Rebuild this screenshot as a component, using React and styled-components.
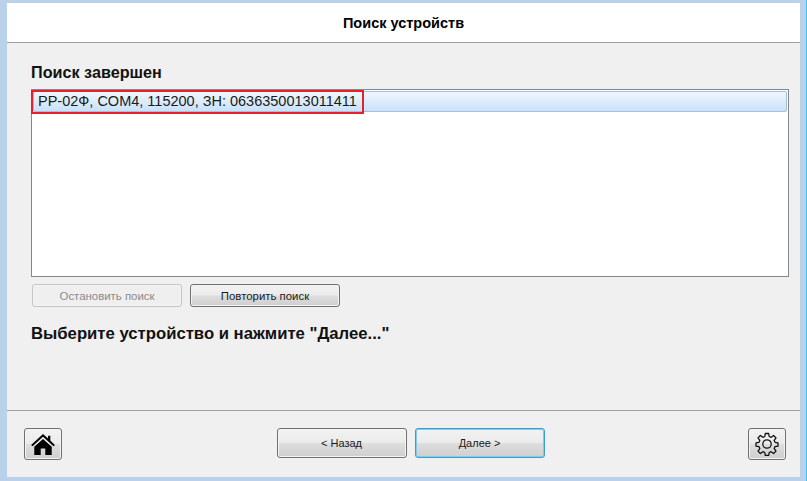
import React from 'react';
import styled, { createGlobalStyle } from 'styled-components';

const GlobalStyle = createGlobalStyle`
  html, body { margin: 0; padding: 0; }
  body { font-family: "Liberation Sans", Arial, sans-serif; background: #b9d1ea; }
`;

const Frame = styled.div`
  width: 807px;
  height: 481px;
  box-sizing: border-box;
  padding: 3px 6px 4px 7px;
  background: #b9d1ea;
  border-right: 1px solid #3fc3ee;
  display: flex;
`;

const Wizard = styled.div`
  flex: 1;
  display: flex;
  flex-direction: column;
  background: #f0f0f0;
`;

const Header = styled.header`
  height: 39px;
  flex: none;
  background: #fff;
  border-bottom: 1px solid #a0a0a0;
  display: flex;
  align-items: center;
  justify-content: center;
  font-size: 14.5px;
  font-weight: 700;
  color: #000;
`;

const Content = styled.main`
  flex: 1;
  padding: 19px 11px 0 24px;
  display: flex;
  flex-direction: column;
`;

const Heading = styled.h2`
  margin: 0;
  font-size: 16.2px;
  line-height: 20px;
  font-weight: 700;
  color: #111;
`;

const DeviceList = styled.div`
  margin-top: 7px;
  height: 188px;
  box-sizing: border-box;
  background: #fff;
  border: 1px solid #828790;
  padding: 1px;
`;

const DeviceRow = styled.div`
  position: relative;
  height: 21px;
  box-sizing: border-box;
  border: 1px solid #a5bfdc;
  border-radius: 2px;
  background: linear-gradient(#f0f7fe, #c9e1fa);
  padding-left: 4px;
  font-size: 14.5px;
  line-height: 19px;
  color: #1a1a1a;
`;

const Highlight = styled.span`
  position: absolute;
  left: -3px;
  top: -2px;
  width: 333px;
  height: 24px;
  border: 2px solid #e8202a;
  box-sizing: border-box;
`;

const SearchButtons = styled.div`
  display: flex;
  gap: 8px;
  margin: 7px 0 0 1px;
`;

const Button = styled.button`
  width: ${({ $w }) => $w}px;
  height: ${({ $h }) => $h}px;
  box-sizing: border-box;
  padding: 0;
  font-family: "Liberation Sans", Arial, sans-serif;
  font-size: 11px;
  display: flex;
  align-items: center;
  justify-content: center;
  color: ${({ disabled }) => (disabled ? '#8a8a8a' : '#1a1a1a')};
  border-radius: 3px;
  border: 1px solid ${({ disabled, $focus }) => (disabled ? '#c4c4c4' : $focus ? '#3c9fc8' : '#707070')};
  box-shadow: ${({ $focus }) => ($focus ? 'inset 0 0 0 1px #7fcdea' : 'inset 0 0 0 1px #f4f4f4')};
  background: ${({ disabled }) =>
    disabled ? '#efefef' : 'linear-gradient(#f2f2f2 0%, #ebebeb 48%, #dddddd 52%, #cfcfcf 100%)'};
`;

const SearchButton = styled(Button)`
  font-size: 11.4px;
`;

const Prompt = styled(Heading)`
  margin-top: 17px;
  font-size: 16.7px;
`;

const Footer = styled.footer`
  height: 67px;
  flex: none;
  box-sizing: border-box;
  border-top: 1px solid #a0a0a0;
  padding: 17px 14px 0 17px;
  display: flex;
  justify-content: space-between;
  align-items: flex-start;
`;

const NavButtons = styled.div`
  display: flex;
  gap: 8px;
  margin-left: 11px;
`;

const HomeIcon = () => (
  <svg width="24" height="22" viewBox="0 0 26 24">
    <path fill="#000" d="M13 1 L18.5 6 V3 H21 V8.3 L26 13 L24.4 14.5 L13 4.2 L1.6 14.5 L0 13 Z" />
    <path fill="#000" d="M13 6.5 L22.5 15 V24 H15.5 V17 H10.5 V24 H3.5 V15 Z" />
  </svg>
);

const GearIcon = () => (
  <svg width="24" height="24" viewBox="0 0 24 24" fill="none" stroke="#111" strokeWidth="1.3" strokeLinejoin="round">
    <path d="M10.3 1.5h3.4l.5 3 1.9.8 2.5-1.8 2.4 2.4-1.8 2.5.8 1.9 3 .5v3.4l-3 .5-.8 1.9 1.8 2.5-2.4 2.4-2.5-1.8-1.9.8-.5 3h-3.4l-.5-3-1.9-.8-2.5 1.8-2.4-2.4 1.8-2.5-.8-1.9-3-.5v-3.4l3-.5.8-1.9-1.8-2.5 2.4-2.4 2.5 1.8 1.9-.8z" />
    <circle cx="12" cy="12" r="4.2" />
  </svg>
);

const App = () => (
  <>
    <GlobalStyle />
    <Frame>
      <Wizard>
        <Header>Поиск устройств</Header>
        <Content>
          <Heading>Поиск завершен</Heading>
          <DeviceList>
            <DeviceRow>
              РР-02Ф, COM4, 115200, ЗН: 0636350013011411
              <Highlight />
            </DeviceRow>
          </DeviceList>
          <SearchButtons>
            <SearchButton $w={150} $h={23} disabled>Остановить поиск</SearchButton>
            <SearchButton $w={150} $h={23}>Повторить поиск</SearchButton>
          </SearchButtons>
          <Prompt>Выберите устройство и нажмите "Далее..."</Prompt>
        </Content>
        <Footer>
          <Button $w={38} $h={32}><HomeIcon /></Button>
          <NavButtons>
            <Button $w={130} $h={30}>&lt; Назад</Button>
            <Button $w={130} $h={30} $focus>Далее &gt;</Button>
          </NavButtons>
          <Button $w={38} $h={32}><GearIcon /></Button>
        </Footer>
      </Wizard>
    </Frame>
  </>
);

export default App;
